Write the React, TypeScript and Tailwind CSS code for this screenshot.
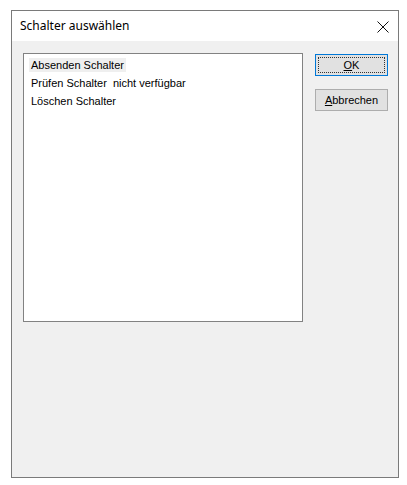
const items = ["Absenden Schalter", "Prüfen Schalter  nicht verfügbar", "Löschen Schalter"];

export default function App() {
  return (
    <div className="min-h-[485px] bg-white pl-[11px] pt-[10px]">
      <div className="flex h-[468px] w-[388px] flex-col border border-[#7a7a7a] bg-[#f0f0f0]">
        <div className="flex h-[30px] items-center justify-between bg-white pl-[8px] pr-[9px]">
          <span className="text-[12px] text-black [font-family:'Noto_Sans',sans-serif]">Schalter auswählen</span>
          <svg width="12" height="12" viewBox="0 0 12 12" className="mt-[1px]">
            <path d="M0.5 0.5 L11.5 11.5 M11.5 0.5 L0.5 11.5" stroke="#111" strokeWidth="1" fill="none" />
          </svg>
        </div>
        <div className="flex gap-[12px] pl-[11px] pt-[12px] [font-family:'Liberation_Sans',Arial,sans-serif] text-[11px] text-black">
          <div className="flex h-[269px] w-[280px] flex-col items-start border border-[#828282] bg-white pl-[5px] pt-[4px]">
            {items.map((item, i) => (
              <span
                key={item}
                className={`mb-[4px] whitespace-pre px-[2px] leading-[14px] ${i === 0 ? "bg-[#efefef]" : ""}`}
              >
                {item}
              </span>
            ))}
          </div>
          <div className="flex flex-col gap-[13px] pt-[1px]">
            <button className="h-[22px] w-[73px] border border-[#0078d7] bg-[#e1e1e1] p-[2px]">
              <span className="flex h-full w-full items-center justify-center border border-dotted border-[#333]">
                <span><u>O</u>K</span>
              </span>
            </button>
            <button className="h-[22px] w-[73px] border border-[#adadad] bg-[#e1e1e1]">
              <u>A</u>bbrechen
            </button>
          </div>
        </div>
      </div>
    </div>
  );
}
